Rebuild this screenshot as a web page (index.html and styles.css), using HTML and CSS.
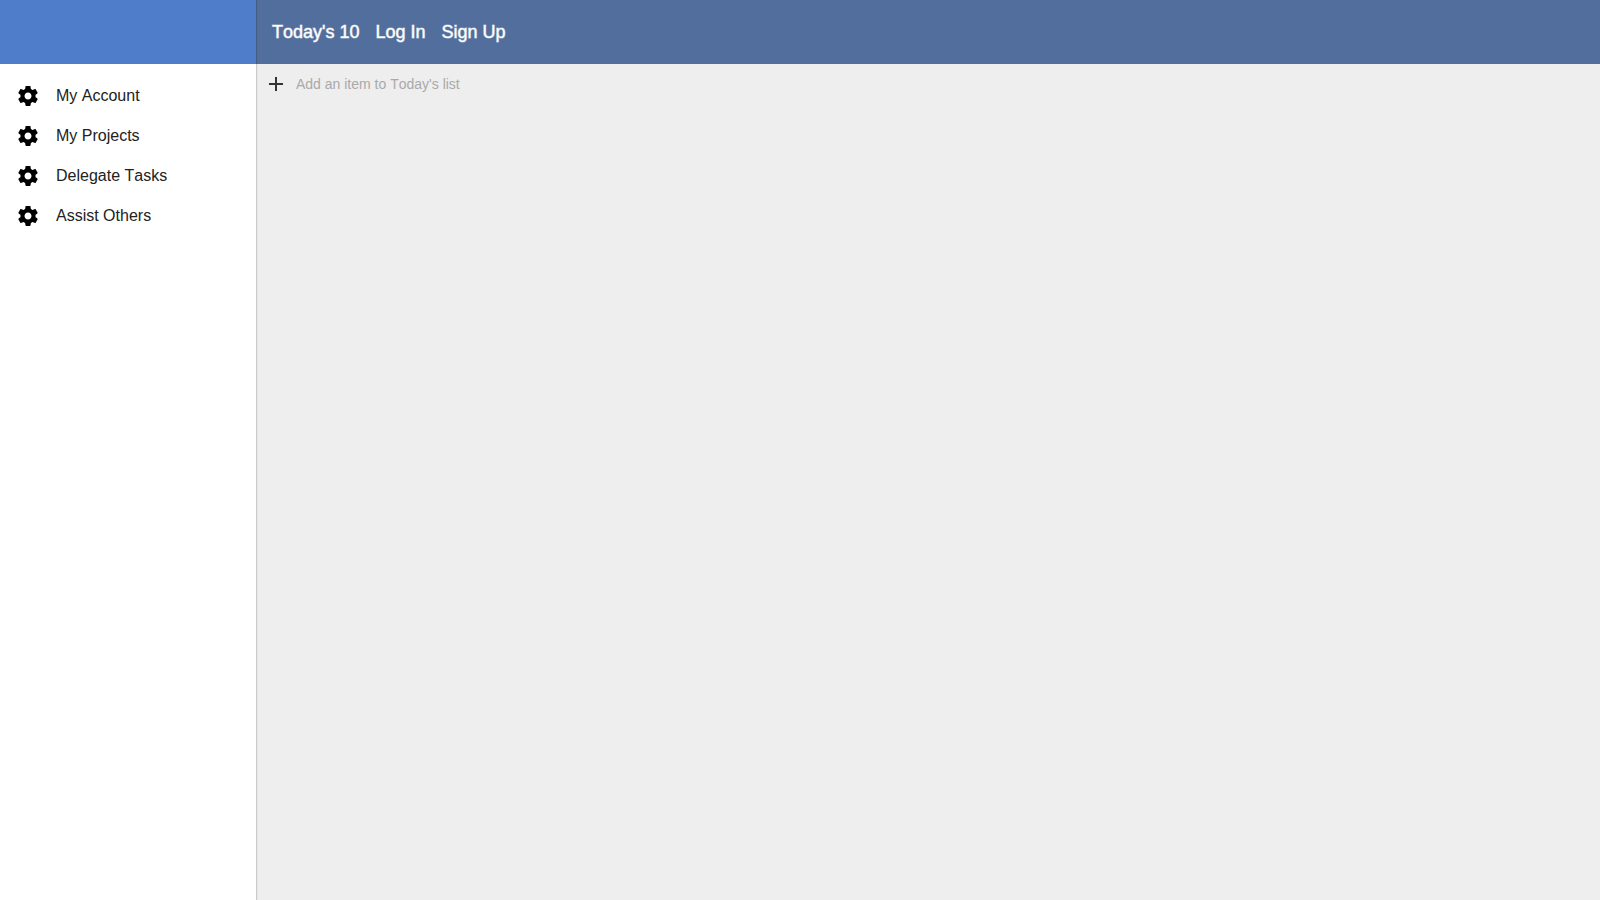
FILE: index.html
```html
<!DOCTYPE html>
<html lang="en">
<head>
    <meta charset="UTF-8">
    <meta name="viewport" content="width=device-width, initial-scale=1.0">
    <title>Today's 10</title>
    <link rel="stylesheet" href="styles.css">
</head>
<body>
<svg class="defs" aria-hidden="true">
    <symbol id="settings" viewBox="0 0 24 24">
        <path d="M19.43 12.98c.04-.32.07-.64.07-.98s-.03-.66-.07-.98l2.11-1.65c.19-.15.24-.42.12-.64l-2-3.46c-.12-.22-.39-.3-.61-.22l-2.49 1c-.52-.4-1.08-.73-1.69-.98l-.38-2.65C14.46 2.18 14.25 2 14 2h-4c-.25 0-.46.18-.49.42l-.38 2.65c-.61.25-1.17.59-1.69.98l-2.49-1c-.23-.09-.49 0-.61.22l-2 3.46c-.13.22-.07.49.12.64l2.11 1.65c-.04.32-.07.65-.07.98s.03.66.07.98l-2.11 1.65c-.19.15-.24.42-.12.64l2 3.46c.12.22.39.3.61.22l2.49-1c.52.4 1.08.73 1.69.98l.38 2.65c.03.24.24.42.49.42h4c.25 0 .46-.18.49-.42l.38-2.65c.61-.25 1.17-.59 1.69-.98l2.49 1c.23.09.49 0 .61-.22l2-3.46c.12-.22.07-.49-.12-.64l-2.11-1.65zM12 15.5c-1.93 0-3.5-1.57-3.5-3.5s1.57-3.5 3.5-3.5 3.5 1.57 3.5 3.5-1.57 3.5-3.5 3.5z"/>
    </symbol>
</svg>
<div class="app">
    <aside class="drawer">
        <div class="drawer-header"></div>
        <nav class="menu">
            <a class="menu-item" href="#"><svg class="icon"><use href="#settings"/></svg>My Account</a>
            <a class="menu-item" href="#"><svg class="icon"><use href="#settings"/></svg>My Projects</a>
            <a class="menu-item" href="#"><svg class="icon"><use href="#settings"/></svg>Delegate Tasks</a>
            <a class="menu-item" href="#"><svg class="icon"><use href="#settings"/></svg>Assist Others</a>
        </nav>
    </aside>
    <main class="main">
        <nav class="toolbar">
            <a href="#">Today's 10</a>
            <a href="#">Log In</a>
            <a href="#">Sign Up</a>
        </nav>
        <form class="add-item">
            <button type="button" aria-label="Add item">
                <svg class="icon" viewBox="0 0 24 24"><path d="M19 13h-6v6h-2v-6H5v-2h6V5h2v6h6v2z"/></svg>
            </button>
            <input type="text" aria-label="Add an item to Today's list" placeholder="Add an item to Today's list">
        </form>
    </main>
</div>
</body>
</html>
```
FILE: styles.css
```css
body {
    margin: 0;
    font-family: "Liberation Sans", Arial, sans-serif;
    font-kerning: none;
}

a {
    color: inherit;
    text-decoration: none;
}

.defs {
    display: none;
}

.icon {
    width: 24px;
    height: 24px;
    flex: none;
    display: block;
}

.app {
    display: flex;
    min-height: 100vh;
}

.drawer {
    position: relative;
    width: 256px;
    flex: none;
    background: #fff;
    box-shadow: 1px 0 1px rgba(0, 0, 0, 0.15);
}

.drawer-header {
    height: 64px;
    background: #4f7dc9;
}

.menu {
    padding: 12px 16px;
}

.menu-item {
    display: flex;
    align-items: center;
    gap: 16px;
    height: 40px;
    font-size: 16px;
    color: #222;
}

.menu-item .icon {
    fill: #000;
}

.main {
    flex: 1;
    background: #eee;
}

.toolbar {
    display: flex;
    align-items: center;
    gap: 16px;
    height: 64px;
    padding: 0 16px;
    background: #526e9c;
    color: #fff;
    font-size: 18px;
    -webkit-text-stroke: 1px rgba(255, 255, 255, 0.5);
}

.add-item {
    display: flex;
    align-items: center;
    gap: 8px;
    padding: 8px;
}

.add-item button {
    padding: 0;
    border: none;
    background: none;
}

.add-item .icon {
    fill: #333;
}

.add-item input {
    flex: 1;
    padding: 0;
    border: none;
    outline: none;
    background: none;
    font-family: inherit;
    font-size: 14px;
    font-kerning: none;
}

.add-item input::placeholder {
    color: #a9a9a9;
}
```
